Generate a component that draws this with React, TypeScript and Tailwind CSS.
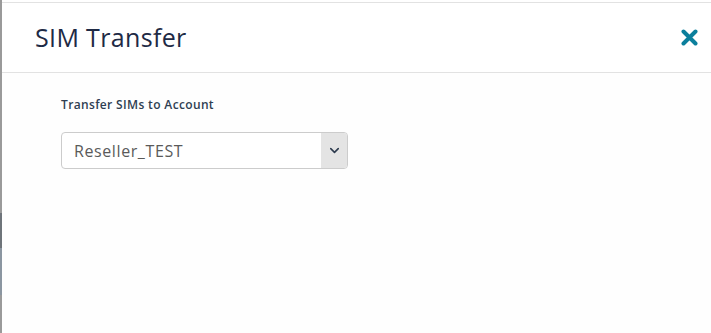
import { ChevronDown } from "lucide-react";

const FONT = { fontFamily: '"Open Sans", "Noto Sans", Arial, sans-serif' };

function LeftEdge() {
  // backdrop sliver of the page behind the dialog
  return (
    <div className="flex w-[2px] shrink-0 flex-col">
      <div className="h-[213px] bg-[#9a9a9a]" />
      <div className="h-[35px] bg-[#6e747a]" />
      <div className="h-[47px] bg-[#8b96a1]" />
      <div className="flex-1 bg-[#9a9a9a]" />
    </div>
  );
}

export default function App() {
  return (
    <div className="flex h-[333px] w-[711px] bg-white" style={FONT}>
      <LeftEdge />
      <div className="flex flex-1 flex-col pt-[2px]">
        {/* Header */}
        <div className="flex h-[71px] items-center justify-between border-y border-[#e2e2e2] pl-[33px] pr-[12px]">
          <h2 className="text-[25px] font-normal leading-none tracking-[0.35px] text-[#1e2a45]">
            SIM Transfer
          </h2>
          <button className="flex h-[20px] w-[20px] items-center justify-center">
            <svg width="17" height="17" viewBox="0 0 17 17">
              <path
                d="M2.5 2.5 L14.5 14.5 M14.5 2.5 L2.5 14.5"
                stroke="#0b7f9c"
                strokeWidth="4"
                strokeLinecap="round"
              />
            </svg>
          </button>
        </div>

        {/* Body */}
        <div className="flex-1 bg-[#fefefe] pl-[59px] pt-[23px]">
          <label className="block text-[12px] font-semibold tracking-[0.35px] text-[#2f3e52]">
            Transfer SIMs to Account
          </label>
          <div className="mt-[18px] flex h-[37px] w-[287px] overflow-hidden rounded-[4px] border border-[#cccccc] bg-white">
            <div className="flex flex-1 items-center pl-[12px] text-[16px] tracking-[0.6px] text-[#5a5a5a]">
              Reseller_TEST
            </div>
            <div className="flex w-[26px] items-center justify-center bg-[#e4e4e4]">
              <ChevronDown size={15} strokeWidth={2.5} color="#2d3b4e" />
            </div>
          </div>
        </div>
      </div>
    </div>
  );
}
